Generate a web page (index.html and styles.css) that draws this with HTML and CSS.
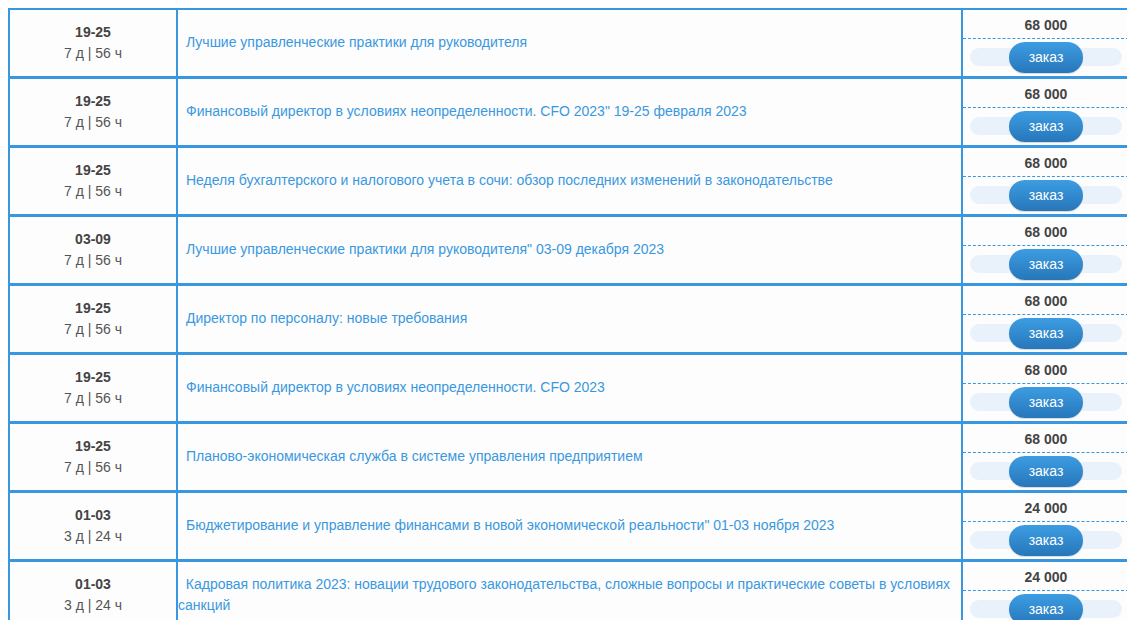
FILE: index.html
```html
<!DOCTYPE html>
<html lang="ru">
<head>
<meta charset="utf-8">
<title>Расписание</title>
<link rel="stylesheet" href="styles.css">
</head>
<body>
<div class="clip">
<div class="table">
  <div class="row">
    <div class="cell date"><b>19-25</b><span>7 д | 56 ч</span></div>
    <div class="cell title"><a href="#">Лучшие управленческие практики для руководителя</a></div>
    <div class="cell order"><div class="price">68 000</div><div class="act"><div class="pill"><button class="btn">заказ</button></div></div></div>
  </div>
  <div class="row">
    <div class="cell date"><b>19-25</b><span>7 д | 56 ч</span></div>
    <div class="cell title"><a href="#">Финансовый директор в условиях неопределенности. CFO 2023" 19-25 февраля 2023</a></div>
    <div class="cell order"><div class="price">68 000</div><div class="act"><div class="pill"><button class="btn">заказ</button></div></div></div>
  </div>
  <div class="row">
    <div class="cell date"><b>19-25</b><span>7 д | 56 ч</span></div>
    <div class="cell title"><a href="#">Неделя бухгалтерского и налогового учета в сочи: обзор последних изменений в законодательстве</a></div>
    <div class="cell order"><div class="price">68 000</div><div class="act"><div class="pill"><button class="btn">заказ</button></div></div></div>
  </div>
  <div class="row">
    <div class="cell date"><b>03-09</b><span>7 д | 56 ч</span></div>
    <div class="cell title"><a href="#">Лучшие управленческие практики для руководителя" 03-09 декабря 2023</a></div>
    <div class="cell order"><div class="price">68 000</div><div class="act"><div class="pill"><button class="btn">заказ</button></div></div></div>
  </div>
  <div class="row">
    <div class="cell date"><b>19-25</b><span>7 д | 56 ч</span></div>
    <div class="cell title"><a href="#">Директор по персоналу: новые требования</a></div>
    <div class="cell order"><div class="price">68 000</div><div class="act"><div class="pill"><button class="btn">заказ</button></div></div></div>
  </div>
  <div class="row">
    <div class="cell date"><b>19-25</b><span>7 д | 56 ч</span></div>
    <div class="cell title"><a href="#">Финансовый директор в условиях неопределенности. CFO 2023</a></div>
    <div class="cell order"><div class="price">68 000</div><div class="act"><div class="pill"><button class="btn">заказ</button></div></div></div>
  </div>
  <div class="row">
    <div class="cell date"><b>19-25</b><span>7 д | 56 ч</span></div>
    <div class="cell title"><a href="#">Планово-экономическая служба в системе управления предприятием</a></div>
    <div class="cell order"><div class="price">68 000</div><div class="act"><div class="pill"><button class="btn">заказ</button></div></div></div>
  </div>
  <div class="row">
    <div class="cell date"><b>01-03</b><span>3 д | 24 ч</span></div>
    <div class="cell title"><a href="#">Бюджетирование и управление финансами в новой экономической реальности" 01-03 ноября 2023</a></div>
    <div class="cell order"><div class="price">24 000</div><div class="act"><div class="pill"><button class="btn">заказ</button></div></div></div>
  </div>
  <div class="row">
    <div class="cell date"><b>01-03</b><span>3 д | 24 ч</span></div>
    <div class="cell title raw"><a href="#">&nbsp;&nbsp;Кадровая политика 2023: новации трудового законодательства, сложные вопросы и практические советы в условиях санкций</a></div>
    <div class="cell order"><div class="price">24 000</div><div class="act"><div class="pill"><button class="btn">заказ</button></div></div></div>
  </div>
</div>
</div>
</body>
</html>
```

FILE: styles.css
```css
html {
  overflow: hidden;
  background: #ffffff;
}

body {
  margin: 8px 0 0 8px;
  font-family: "Liberation Sans", Arial, sans-serif;
  font-size: 14px;
  line-height: 21px;
  color: #555555;
}

.clip {
  width: 1119px;
  height: 612px;
  overflow: hidden;
}

.table {
  width: 1119px;
  border: 2px solid #3897df;
  border-bottom: 0;
  background: #fdfdfd;
}

.row {
  display: grid;
  grid-template-columns: 166px 783px 166px;
  column-gap: 2px;
  background: #3897df;
  border-bottom: 3px solid #3897df;
  min-height: 66px;
}

.cell {
  background: #fdfdfd;
}

.date {
  display: flex;
  flex-direction: column;
  align-items: center;
  justify-content: center;
  color: #555555;
}

.date b {
  color: #444444;
  font-weight: bold;
}

.title {
  display: flex;
  align-items: center;
  padding: 0 8px 1px;
}

.title.raw {
  padding: 0 8px 0 0;
}

.title a {
  color: #3a98e0;
  text-decoration: none;
}

.order {
  display: flex;
  flex-direction: column;
}

.price {
  height: 29px;
  padding-top: 5px;
  box-sizing: border-box;
  text-align: center;
  font-weight: bold;
  color: #444444;
  border-bottom: 1px dashed #3a98e0;
}

.act {
  height: 36px;
  display: flex;
  align-items: center;
  padding: 0 7px;
}

.pill {
  flex: 1;
  height: 18px;
  border-radius: 9px;
  background: #e9f2fb;
  display: flex;
  align-items: center;
  justify-content: center;
}

.btn {
  width: 74px;
  height: 31px;
  flex: none;
  border: 0;
  border-radius: 16px;
  background: linear-gradient(#3d9de2, #2776ba);
  color: #ffffff;
  font-family: "Liberation Sans", Arial, sans-serif;
  font-size: 14px;
  padding: 0;
  box-shadow: 0 1px 1px rgba(0, 0, 0, 0.15);
}
```
